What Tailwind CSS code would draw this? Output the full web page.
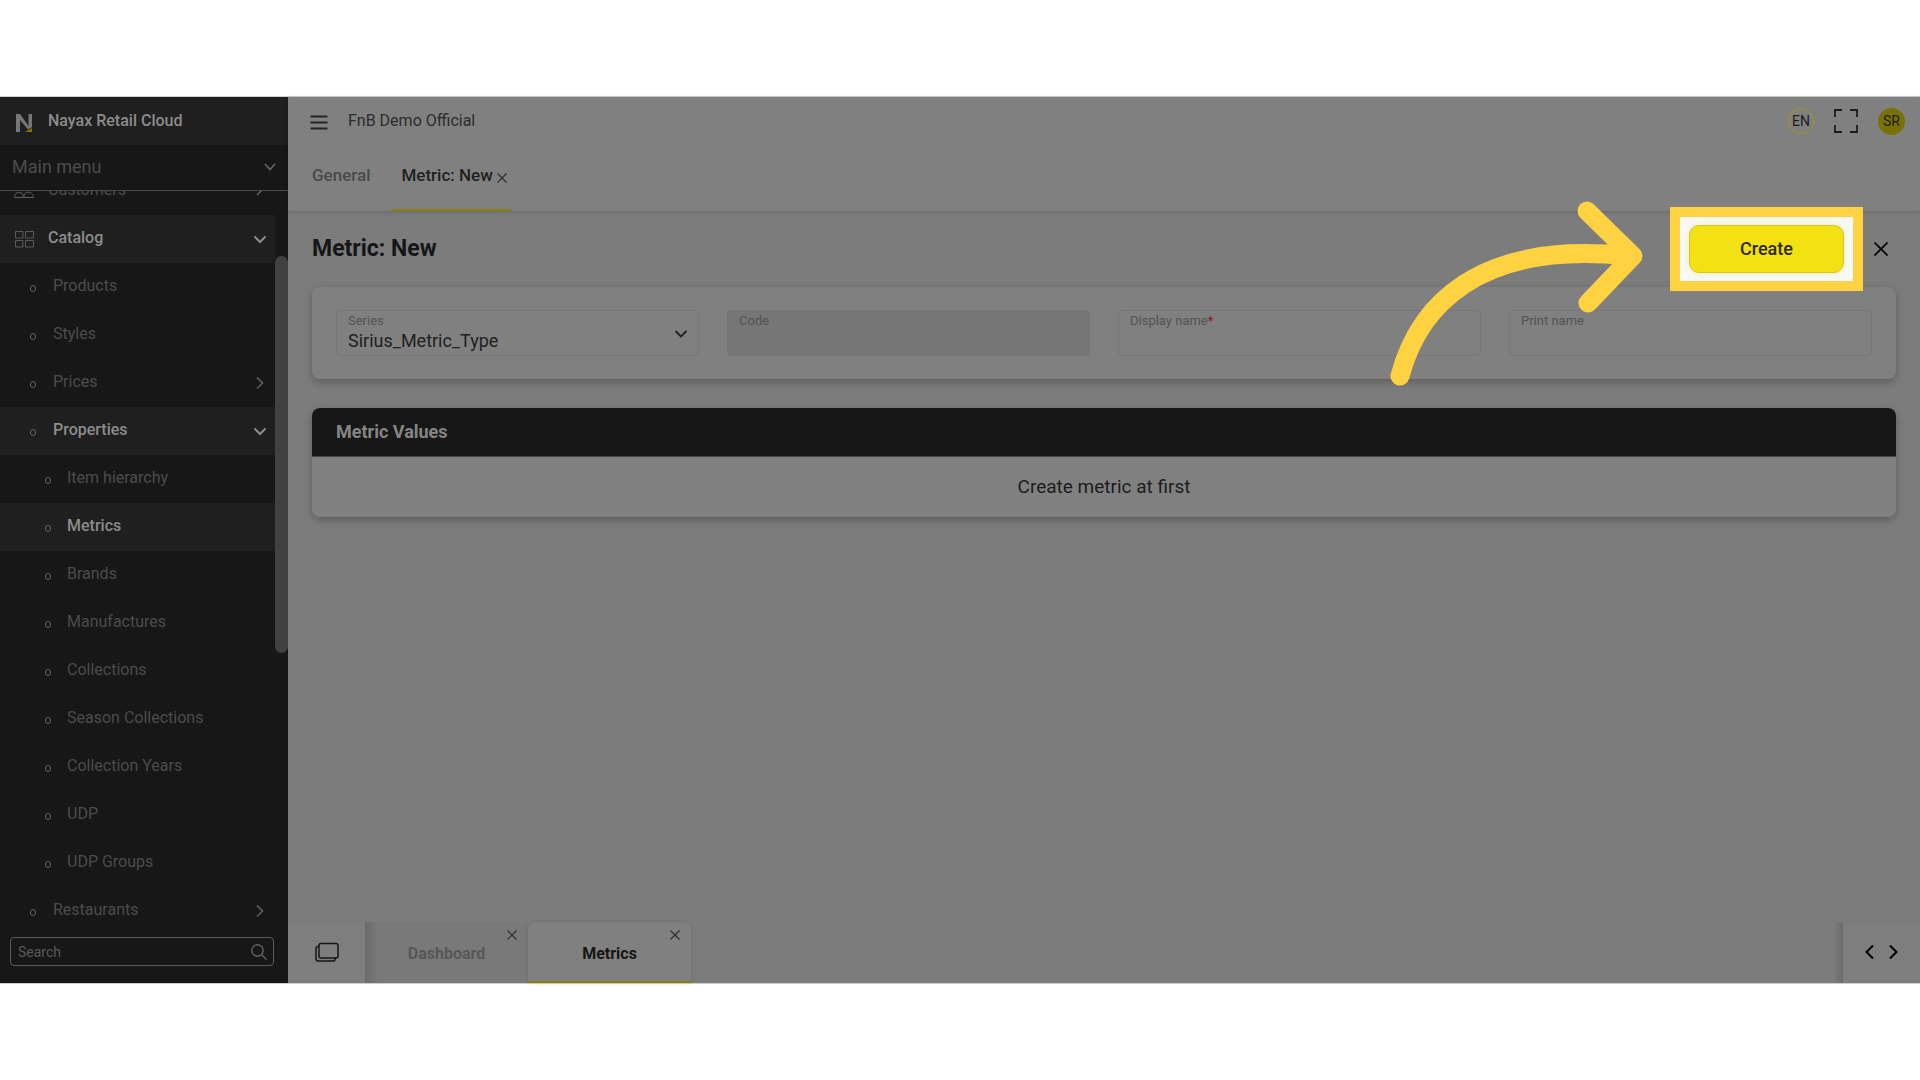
<!DOCTYPE html>
<html lang="en">
<head>
<meta charset="utf-8">
<title>Nayax Retail Cloud</title>
<script src="https://cdn.jsdelivr.net/npm/@tailwindcss/browser@4"></script>
</head>
<body class="bg-white font-[Roboto,sans-serif] text-base text-[#1c1c1c]">
<div class="flex h-screen flex-col py-24">
<div class="flex min-h-0 flex-1 border-y border-[#cfcfcf] bg-[#7c7c7c]">

  <!-- Sidebar -->
  <aside class="flex w-72 shrink-0 flex-col bg-[#171717] text-[#4c4c4c]">
    <div class="flex h-12 shrink-0 items-center gap-4 bg-[#1f1f1f] pl-4 font-medium text-[#8c8c8c]">
      <svg class="mt-1 h-5 w-4" viewBox="0 0 16 20"><path d="M0 19V1h4l8.500 12V1H16v13l-4 2.500L4 7v12z" fill="#777"/><path d="M9 19l7-4v4z" fill="#8a7400"/></svg>
      <span>Nayax Retail Cloud</span>
    </div>
    <button class="flex h-[46px] shrink-0 items-center justify-between border-b border-[#4a4a4a] px-3 pb-0.5 text-lg">
      <span>Main menu</span>
      <svg class="h-3 w-3" viewBox="0 0 12 12" fill="none" stroke="#686868" stroke-width="1.600"><path d="M1 3l5 5.500L11 3"/></svg>
    </button>
    <div class="flex min-h-0 flex-1">
      <nav class="min-w-0 flex-1 overflow-hidden">
        <ul class="-mt-6">
          <li><a href="#" class="flex h-12 items-center pr-2 pb-0.5 pl-3.5"><svg class="h-5 w-5" viewBox="0 0 20 20" fill="none" stroke="#606060"><circle cx="6" cy="7" r="3"/><circle cx="14" cy="6" r="3"/><path d="M.5 17.500c0-7 9-7 9 0zM10 17.500c-1-7 9.500-7 9.500 0z"/></svg><span class="flex-1 pl-3.5">Customers</span><svg class="h-3.5 w-3.5" viewBox="0 0 14 14" fill="none" stroke="#606060" stroke-width="1.600"><path d="M4 2l5 5-5 5"/></svg></a></li>
          <li><a href="#" class="flex h-12 items-center bg-[#1f1f1f] pr-2 pb-0.5 pl-3.5 font-medium text-[#8c8c8c]"><svg class="mt-0.5 h-5 w-5" viewBox="0 0 20 20" fill="none" stroke="#5a5a5a"><path d="M1.500 2.500h7.500v6.500H1.500zM11.500 2.500h8v6.500h-8zM1.500 11.500h7.500v6.500H1.500zM11.500 11.500h8v6.500h-8z"/></svg><span class="flex-1 pl-3.5">Catalog</span><svg class="mt-0.5 h-3.5 w-3.5" viewBox="0 0 14 14" fill="none" stroke="#8c8c8c" stroke-width="2"><path d="M1.500 4.500L7 10l5.500-5.500"/></svg></a></li>
          <li><a href="#" class="flex h-12 items-center pr-2 pb-0.5 pl-[30px]"><i class="mt-1 h-[7px] w-1.5 rounded-full border border-[#626262]"></i><span class="flex-1 pl-[17px]">Products</span></a></li>
          <li><a href="#" class="flex h-12 items-center pr-2 pb-0.5 pl-[30px]"><i class="mt-1 h-[7px] w-1.5 rounded-full border border-[#626262]"></i><span class="flex-1 pl-[17px]">Styles</span></a></li>
          <li><a href="#" class="flex h-12 items-center pr-2 pb-0.5 pl-[30px]"><i class="mt-1 h-[7px] w-1.5 rounded-full border border-[#626262]"></i><span class="flex-1 pl-[17px]">Prices</span><svg class="mt-0.5 h-3.5 w-3.5" viewBox="0 0 14 14" fill="none" stroke="#606060" stroke-width="1.600"><path d="M4 1.500L9.500 7 4 12.500"/></svg></a></li>
          <li><a href="#" class="flex h-12 items-center bg-[#1f1f1f] pr-2 pb-0.5 pl-[30px] font-medium text-[#8c8c8c]"><i class="mt-1 h-[7px] w-1.5 rounded-full border border-[#626262]"></i><span class="flex-1 pl-[17px]">Properties</span><svg class="mt-0.5 h-3.5 w-3.5" viewBox="0 0 14 14" fill="none" stroke="#8c8c8c" stroke-width="2"><path d="M1.500 4.500L7 10l5.500-5.500"/></svg></a></li>
          <li><a href="#" class="flex h-12 items-center pb-0.5 pl-[45px]"><i class="mt-1 h-[7px] w-1.5 rounded-full border border-[#626262]"></i><span class="pl-4">Item hierarchy</span></a></li>
          <li><a href="#" class="flex h-12 items-center bg-[#1f1f1f] pb-0.5 pl-[45px] font-medium text-[#8c8c8c]"><i class="mt-1 h-[7px] w-1.5 rounded-full border border-[#626262]"></i><span class="pl-4">Metrics</span></a></li>
          <li><a href="#" class="flex h-12 items-center pb-0.5 pl-[45px]"><i class="mt-1 h-[7px] w-1.5 rounded-full border border-[#626262]"></i><span class="pl-4">Brands</span></a></li>
          <li><a href="#" class="flex h-12 items-center pb-0.5 pl-[45px]"><i class="mt-1 h-[7px] w-1.5 rounded-full border border-[#626262]"></i><span class="pl-4">Manufactures</span></a></li>
          <li><a href="#" class="flex h-12 items-center pb-0.5 pl-[45px]"><i class="mt-1 h-[7px] w-1.5 rounded-full border border-[#626262]"></i><span class="pl-4">Collections</span></a></li>
          <li><a href="#" class="flex h-12 items-center pb-0.5 pl-[45px]"><i class="mt-1 h-[7px] w-1.5 rounded-full border border-[#626262]"></i><span class="pl-4">Season Collections</span></a></li>
          <li><a href="#" class="flex h-12 items-center pb-0.5 pl-[45px]"><i class="mt-1 h-[7px] w-1.5 rounded-full border border-[#626262]"></i><span class="pl-4">Collection Years</span></a></li>
          <li><a href="#" class="flex h-12 items-center pb-0.5 pl-[45px]"><i class="mt-1 h-[7px] w-1.5 rounded-full border border-[#626262]"></i><span class="pl-4">UDP</span></a></li>
          <li><a href="#" class="flex h-12 items-center pb-0.5 pl-[45px]"><i class="mt-1 h-[7px] w-1.5 rounded-full border border-[#626262]"></i><span class="pl-4">UDP Groups</span></a></li>
          <li><a href="#" class="flex h-12 items-center pr-2 pb-0.5 pl-[30px]"><i class="mt-1 h-[7px] w-1.5 rounded-full border border-[#626262]"></i><span class="flex-1 pl-[17px]">Restaurants</span><svg class="mt-0.5 h-3.5 w-3.5" viewBox="0 0 14 14" fill="none" stroke="#606060" stroke-width="1.600"><path d="M4 1.500L9.500 7 4 12.500"/></svg></a></li>
        </ul>
      </nav>
      <div class="w-[13px] pt-[65px]"><div class="h-[397px] rounded-full bg-[#414141]"></div></div>
    </div>
    <div class="h-12 shrink-0 pt-0.5 pr-3.5 pl-2.5">
      <div class="flex h-[29px] items-center rounded border border-[#5a5a5a] pr-1.5 pl-[7px]">
        <input aria-label="Search" placeholder="Search" class="min-w-0 flex-1 bg-transparent text-sm outline-none placeholder:text-[#5a5a5a]">
        <svg class="h-4 w-4" viewBox="0 0 16 16" fill="none" stroke="#606060" stroke-width="1.500"><circle cx="6.500" cy="6.500" r="5.700"/><path d="M10.500 10.500l5 5"/></svg>
      </div>
    </div>
  </aside>

  <!-- Main column -->
  <div class="flex min-w-0 flex-1 flex-col">
    <header class="bg-[#808080] shadow-[0_1px_4px_rgba(0,0,0,0.18)]">
      <div class="flex h-12 items-center pr-[15px] pl-[22px]">
        <button aria-label="Toggle menu"><svg class="h-[17px] w-[18px]" viewBox="0 0 18 17" stroke="#242424" stroke-width="1.800"><path d="M.5 3.500h17M.5 9.500h17M.5 15.500h17"/></svg></button>
        <span class="flex-1 pl-5 text-[#2c2c2c]">FnB Demo Official</span>
        <button class="flex h-[26px] w-[26px] items-center justify-center rounded-full border border-[#a0951c] text-sm">EN</button>
        <button aria-label="Full screen" class="ml-5"><svg class="h-6 w-6" viewBox="0 0 24 24" fill="none" stroke="#1c1c1c" stroke-width="1.800"><path d="M1 8V1h7M16 1h7v7M1 16v7h7M16 23h7v-7"/></svg></button>
        <button class="ml-5 flex h-[27px] w-[27px] items-center justify-center rounded-full bg-[#7a7106] text-sm">SR</button>
      </div>
      <div class="flex h-[66px] gap-5 pl-6 text-[17px] font-medium">
        <a href="#" class="pt-[18px] text-[#4a4a4a]">General</a>
        <a href="#" class="ml-px flex border-b-2 border-[#8a7f08] pt-[18px] pr-1 pl-2.5 text-[#202020]">Metric: New<svg class="mt-2.5 ml-1 h-2.5 w-2.5" viewBox="0 0 10 10" stroke="#303030" stroke-width="1.300"><path d="M.5.500l9 9M9.500.500l-9 9"/></svg></a>
      </div>
    </header>

    <main class="min-h-0 flex-1 px-6">
      <div class="flex h-[76px] items-center">
        <h1 class="flex-1 text-[23px] font-bold text-[#161616]">Metric: New</h1>
        <div class="relative z-10">
          <div class="absolute -inset-x-[19px] -inset-y-[18px] border-10 border-[#ffd241] bg-[#f8f8f8]"></div>
          <svg class="pointer-events-none absolute -top-[25px] right-[196px] h-[190px] w-[260px]" viewBox="0 0 260 190" fill="none" stroke="#ffd241" stroke-width="19" stroke-linecap="round" stroke-linejoin="round"><path d="M12 176C30 108 88 40 240 56M199 11L245 56L200 103"/></svg>
          <button class="relative block h-12 w-[155px] rounded-[10px] border border-[#d2c524] bg-[#f4e113] text-lg font-medium text-[#2b2b12] shadow-[0_0_6px_rgba(244,225,19,0.35)]">Create</button>
        </div>
        <button aria-label="Close" class="ml-[22px] flex h-[30px] w-[30px] items-center justify-center"><svg class="h-3.5 w-3.5" viewBox="0 0 14 14" stroke="#000" stroke-width="1.700"><path d="M.5.500l13 13M13.500.500l-13 13"/></svg></button>
      </div>

      <form class="grid grid-cols-4 gap-7 rounded-lg bg-[#808080] px-6 py-[23px] shadow-[0_3px_8px_rgba(0,0,0,0.25)]">
        <div class="relative flex h-[46px] flex-col rounded border border-[#777] px-[11px]">
          <label for="series" class="pt-0.5 text-[13px] leading-4 text-[#535353]">Series</label>
          <select id="series" class="appearance-none bg-transparent text-lg leading-6 text-[#202020] outline-none"><option>Sirius_Metric_Type</option></select>
          <svg class="pointer-events-none absolute top-4 right-2.5 h-3.5 w-3.5" viewBox="0 0 14 14" fill="none" stroke="#202020" stroke-width="1.800"><path d="M1.500 4L7 9.500 12.500 4"/></svg>
        </div>
        <div class="flex h-[46px] flex-col rounded border border-[#767676] bg-[#767676] px-[11px]">
          <label for="code" class="pt-0.5 text-[13px] leading-4 text-[#535353]">Code</label>
          <input id="code" disabled class="h-6 bg-transparent">
        </div>
        <div class="flex h-[46px] flex-col rounded border border-[#777] px-[11px]">
          <label for="display" class="pt-0.5 text-[13px] leading-4 text-[#535353]">Display name<span class="text-[#8c1414]">*</span></label>
          <input id="display" class="h-6 bg-transparent outline-none">
        </div>
        <div class="flex h-[46px] flex-col rounded border border-[#777] px-[11px]">
          <label for="print" class="pt-0.5 text-[13px] leading-4 text-[#535353]">Print name</label>
          <input id="print" class="h-6 bg-transparent outline-none">
        </div>
      </form>

      <section class="mt-[29px] overflow-hidden rounded-lg bg-[#808080] shadow-[0_3px_8px_rgba(0,0,0,0.25)]">
        <h2 class="flex h-12 items-center bg-[#171717] px-6 text-lg font-bold text-[#858585]">Metric Values</h2>
        <p class="flex h-[61px] items-center justify-center border-t border-[#484848] text-[19px]">Create metric at first</p>
      </section>
    </main>

    <footer class="flex h-[61px] shrink-0">
      <button aria-label="All windows" class="flex w-[77px] items-center justify-center bg-[#7e7e7e] pb-0.5"><svg class="h-5 w-6" viewBox="0 0 24 20" fill="none" stroke="#161616" stroke-width="1.500"><rect x="4" y="1.500" width="19" height="14.500" rx="2"/><path d="M4 4.500H3a2 2 0 0 0-2 2V17a2 2 0 0 0 2 2h15.500a2 2 0 0 0 1.500-3"/></svg></button>
      <div class="relative flex w-[163px] items-center justify-center bg-linear-to-r from-[#6b6b6b] to-[#797979] to-8% font-bold text-[#575757]"><a href="#" class="pt-0.5">Dashboard</a>
        <button aria-label="Close Dashboard" class="absolute top-2 right-[11px]"><svg class="h-2.5 w-2.5" viewBox="0 0 10 10" stroke="#303030" stroke-width="1.200"><path d="M.5.500l9 9M9.500.500l-9 9"/></svg></button></div>
      <div class="relative flex w-[163px] items-center justify-center rounded-t-lg border-b-2 border-[#8a7f08] bg-[#808080] font-bold text-[#161616] shadow-[0_0_4px_rgba(0,0,0,0.12)]"><a href="#" class="pt-1">Metrics</a>
        <button aria-label="Close Metrics" class="absolute top-2 right-[11px]"><svg class="h-2.5 w-2.5" viewBox="0 0 10 10" stroke="#303030" stroke-width="1.200"><path d="M.5.500l9 9M9.500.500l-9 9"/></svg></button></div>
      <div class="flex flex-1 justify-end"><div class="w-2.5 bg-linear-to-r from-[#7c7c7c] to-[#6c6c6c]"></div></div>
      <div class="flex w-[77px] items-center justify-center gap-[9px] bg-[#7e7e7e] pb-0.5">
        <button aria-label="Previous"><svg class="h-3.5 w-3.5" viewBox="0 0 14 14" fill="none" stroke="#000" stroke-width="2"><path d="M10 0.500L3.500 7l6.500 6.500"/></svg></button>
        <button aria-label="Next"><svg class="h-3.5 w-3.5" viewBox="0 0 14 14" fill="none" stroke="#000" stroke-width="2"><path d="M4 0.500L10.500 7l-6.500 6.500"/></svg></button>
      </div>
    </footer>
  </div>
</div>
</div>
</body>
</html>
